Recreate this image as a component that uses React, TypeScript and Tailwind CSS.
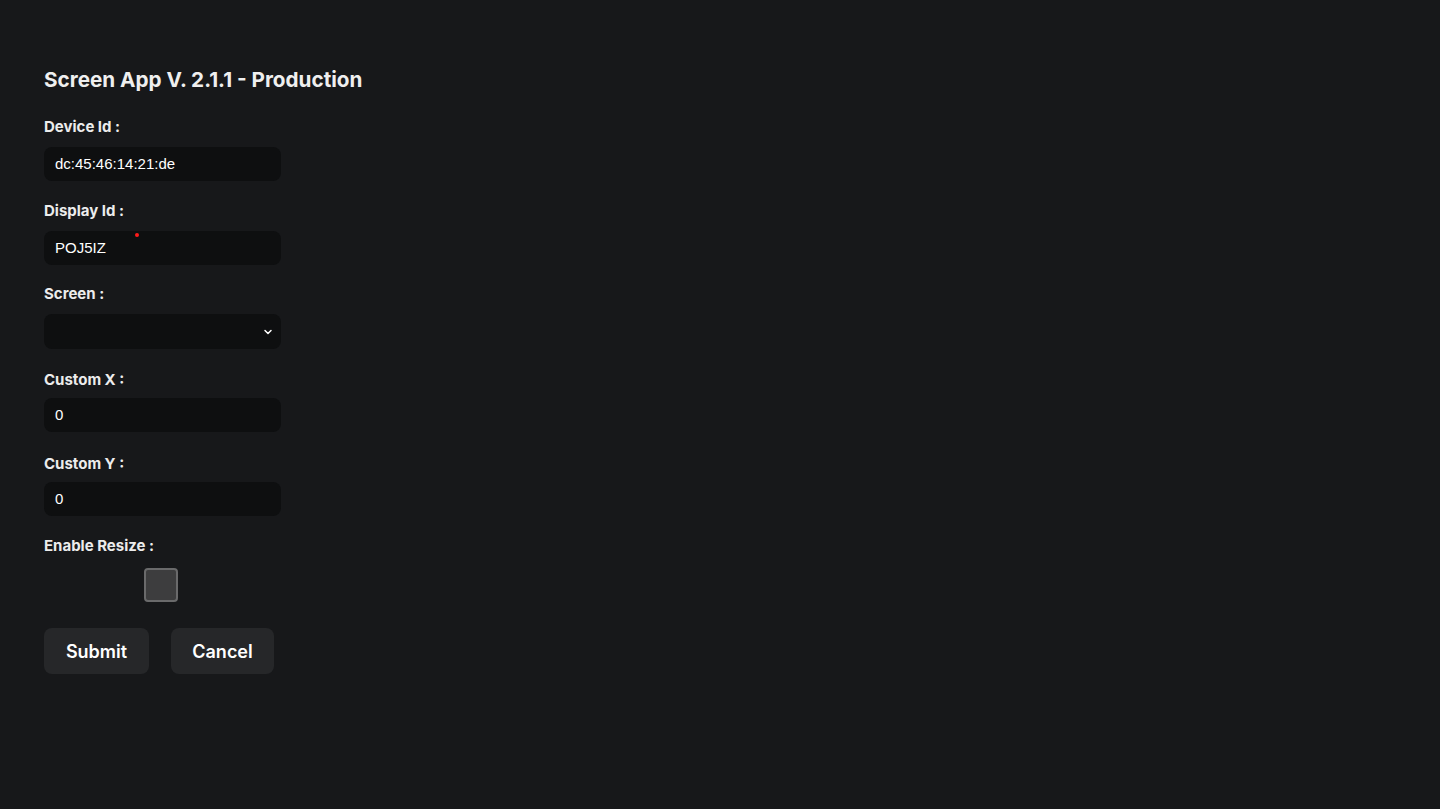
import { useState } from "react";

const Label = ({ text }: { text: string }) => (
  <label className="block text-[15px] leading-5 font-bold text-[#ececec]">{text}</label>
);

const Field = ({ value, dot }: { value: string; dot?: boolean }) => (
  <div className="relative mt-[10px] w-[237px] h-[34px] rounded-lg bg-[#0e0f10] flex items-center px-[11px]">
    <span className="text-[15px] text-white font-['Liberation_Sans',Arial,sans-serif]">{value}</span>
    {dot && <span className="absolute left-[91px] top-[2px] w-[4px] h-[4px] rounded-full bg-[#ff1a1a]" />}
  </div>
);

export default function App() {
  const [resize, setResize] = useState(false);

  return (
    <div className="min-h-[809px] w-full bg-[#17181a] font-['Inter',sans-serif] text-white">
      <div className="pl-[44px] pt-[66px]">
        <h1 className="text-[20.7px] leading-7 font-bold text-[#efefef]">
          Screen App V. 2.1.1 - Production
        </h1>

        <div className="mt-[23px]">
          <Label text="Device Id :" />
          <Field value="dc:45:46:14:21:de" />
        </div>

        <div className="mt-[20px]">
          <Label text="Display Id :" />
          <Field value="POJ5IZ" dot />
        </div>

        <div className="mt-[19px]">
          <Label text="Screen :" />
          <div className="mt-[10px] w-[237px] h-[35px] rounded-lg bg-[#0e0f10] flex items-center justify-end pr-[7px]">
            <svg width="12" height="12" viewBox="0 0 24 24" fill="none" stroke="white" strokeWidth="3" strokeLinecap="round" strokeLinejoin="round">
              <path d="M6 9l6 6 6-6" />
            </svg>
          </div>
        </div>

        <div className="mt-[21px]">
          <Label text="Custom X :" />
          <div className="-mt-[2px]">
            <Field value="0" />
          </div>
        </div>

        <div className="mt-[22px]">
          <Label text="Custom Y :" />
          <div className="-mt-[2px]">
            <Field value="0" />
          </div>
        </div>

        <div className="mt-[20px]">
          <Label text="Enable Resize :" />
          <div className="mt-[12px] w-[237px] flex justify-center">
            <button
              onClick={() => setResize(!resize)}
              className="w-[34px] h-[34px] rounded-[4px] bg-[#3d3d3e] border-2 border-[#6a6a6b] -ml-[3px]"
            />
          </div>
        </div>

        <div className="mt-[26px] flex gap-[22px]">
          <button className="w-[105px] h-[46px] rounded-lg bg-[#262729] text-[18px] font-semibold text-white">
            Submit
          </button>
          <button className="w-[103px] h-[46px] rounded-lg bg-[#262729] text-[18px] font-semibold text-white">
            Cancel
          </button>
        </div>
      </div>
    </div>
  );
}
